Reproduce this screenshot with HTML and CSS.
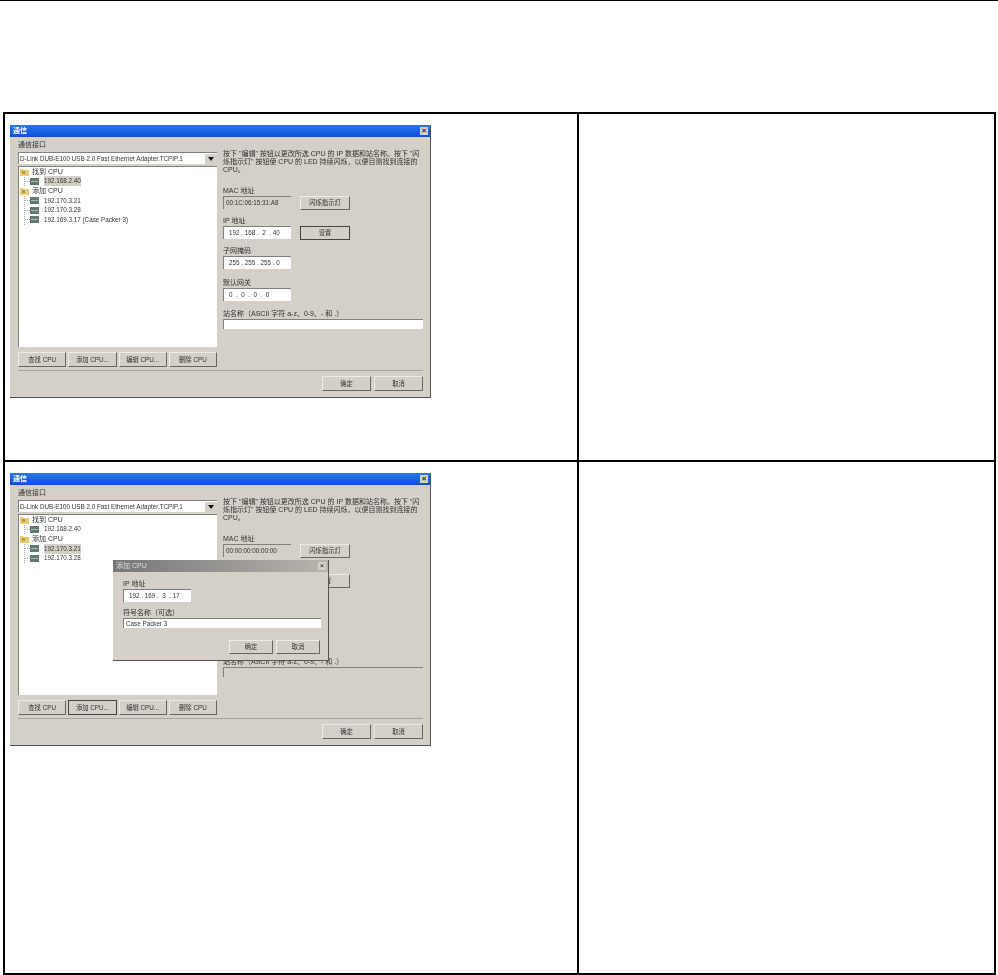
FILE: index.html
```html
<!DOCTYPE html>
<html lang="zh-CN">
<head>
    <meta charset="UTF-8">
    <meta name="viewport" content="width=device-width, initial-scale=1.0">
    <title>通信</title>
    <link rel="stylesheet" href="styles.css">
</head>
<body>

    <div class="top-rule"></div>

    <table class="doc-table">
        <tr class="row-one">
            <td class="cell-left">
                <div class="dialog">
                    <div class="titlebar">
                        <span>通信</span>
                        <span class="close">×</span>
                    </div>
                    <div class="dialog-body">
                        <div class="col-left">
                            <div class="label">通信接口</div>
                            <div class="select">
                                <span>D-Link DUB-E100 USB 2.0 Fast Ethernet Adapter.TCPIP.1</span>
                                <span class="select-arrow"></span>
                            </div>
                            <div class="tree">
                                <div class="tree-row">
                                    <svg class="folder" viewBox="0 0 9 8"><path d="M0 1h3l1 1h5v6H0z" fill="#e8cc70"/><path d="M2 3h3v3H2z" fill="#b09a50"/></svg>
                                    <span class="tree-cn">找到 CPU</span>
                                </div>
                                <div class="tree-group">
                                    <div class="tree-row child">
                                        <svg class="cpu" viewBox="0 0 9 7"><path d="M0 0h9v7H0z" fill="#5f7a6c"/><path d="M1 3h7v1H1z" fill="#a8b8ae"/></svg>
                                        <span class="selected">192.168.2.40</span>
                                    </div>
                                </div>
                                <div class="tree-row">
                                    <svg class="folder" viewBox="0 0 9 8"><path d="M0 1h3l1 1h5v6H0z" fill="#e8cc70"/><path d="M2 3h3v3H2z" fill="#b09a50"/></svg>
                                    <span class="tree-cn">添加 CPU</span>
                                </div>
                                <div class="tree-group">
                                    <div class="tree-row child">
                                        <svg class="cpu" viewBox="0 0 9 7"><path d="M0 0h9v7H0z" fill="#5f7a6c"/><path d="M1 3h7v1H1z" fill="#a8b8ae"/></svg>
                                        <span>192.170.3.21</span>
                                    </div>
                                    <div class="tree-row child">
                                        <svg class="cpu" viewBox="0 0 9 7"><path d="M0 0h9v7H0z" fill="#5f7a6c"/><path d="M1 3h7v1H1z" fill="#a8b8ae"/></svg>
                                        <span>192.170.3.28</span>
                                    </div>
                                    <div class="tree-row child">
                                        <svg class="cpu" viewBox="0 0 9 7"><path d="M0 0h9v7H0z" fill="#5f7a6c"/><path d="M1 3h7v1H1z" fill="#a8b8ae"/></svg>
                                        <span>192.169.3.17 (Case Packer 3)</span>
                                    </div>
                                </div>
                            </div>
                            <div class="button-row">
                                <button>查找 CPU</button>
                                <button>添加 CPU...</button>
                                <button>编辑 CPU...</button>
                                <button>删除 CPU</button>
                            </div>
                        </div>
                        <div class="col-right">
                            <p class="help">按下 "编辑" 按钮以更改所选 CPU 的 IP 数据和站名称。按下 "闪烁指示灯" 按钮使 CPU 的 LED 持续闪烁，以便目测找到连接的 CPU。</p>
                            <div class="label label-mac">MAC 地址</div>
                            <div class="field-row">
                                <div class="field field-off">00:1C:06:15:31:A8</div>
                                <button class="side-btn">闪烁指示灯</button>
                            </div>
                            <div class="label label-gap">IP 地址</div>
                            <div class="field-row">
                                <div class="field ip">192 . 168 .  2  . 40</div>
                                <button class="side-btn focus">设置</button>
                            </div>
                            <div class="label label-gap">子网掩码</div>
                            <div class="field-row">
                                <div class="field ip">255 . 255 . 255 . 0</div>
                            </div>
                            <div class="label label-gap2">默认网关</div>
                            <div class="field-row">
                                <div class="field ip">0  .  0  .  0  .  0</div>
                            </div>
                            <div class="label label-last">站名称（ASCII 字符 a-z、0-9、- 和 .）</div>
                            <div class="field field-wide"></div>
                        </div>
                    </div>
                    <div class="dialog-footer">
                        <button>确定</button>
                        <button>取消</button>
                    </div>
                </div>
            </td>
            <td class="cell-right"></td>
        </tr>
        <tr class="row-two">
            <td class="cell-left">
                <div class="dialog">
                    <div class="titlebar">
                        <span>通信</span>
                        <span class="close">×</span>
                    </div>
                    <div class="dialog-body">
                        <div class="col-left">
                            <div class="label">通信接口</div>
                            <div class="select">
                                <span>D-Link DUB-E100 USB 2.0 Fast Ethernet Adapter.TCPIP.1</span>
                                <span class="select-arrow"></span>
                            </div>
                            <div class="tree">
                                <div class="tree-row">
                                    <svg class="folder" viewBox="0 0 9 8"><path d="M0 1h3l1 1h5v6H0z" fill="#e8cc70"/><path d="M2 3h3v3H2z" fill="#b09a50"/></svg>
                                    <span class="tree-cn">找到 CPU</span>
                                </div>
                                <div class="tree-group">
                                    <div class="tree-row child">
                                        <svg class="cpu" viewBox="0 0 9 7"><path d="M0 0h9v7H0z" fill="#5f7a6c"/><path d="M1 3h7v1H1z" fill="#a8b8ae"/></svg>
                                        <span>192.168.2.40</span>
                                    </div>
                                </div>
                                <div class="tree-row">
                                    <svg class="folder" viewBox="0 0 9 8"><path d="M0 1h3l1 1h5v6H0z" fill="#e8cc70"/><path d="M2 3h3v3H2z" fill="#b09a50"/></svg>
                                    <span class="tree-cn">添加 CPU</span>
                                </div>
                                <div class="tree-group">
                                    <div class="tree-row child">
                                        <svg class="cpu" viewBox="0 0 9 7"><path d="M0 0h9v7H0z" fill="#5f7a6c"/><path d="M1 3h7v1H1z" fill="#a8b8ae"/></svg>
                                        <span class="selected">192.170.3.21</span>
                                    </div>
                                    <div class="tree-row child">
                                        <svg class="cpu" viewBox="0 0 9 7"><path d="M0 0h9v7H0z" fill="#5f7a6c"/><path d="M1 3h7v1H1z" fill="#a8b8ae"/></svg>
                                        <span>192.170.3.28</span>
                                    </div>
                                </div>
                            </div>
                            <div class="button-row">
                                <button>查找 CPU</button>
                                <button class="focus">添加 CPU...</button>
                                <button>编辑 CPU...</button>
                                <button>删除 CPU</button>
                            </div>
                        </div>
                        <div class="col-right">
                            <p class="help">按下 "编辑" 按钮以更改所选 CPU 的 IP 数据和站名称。按下 "闪烁指示灯" 按钮使 CPU 的 LED 持续闪烁，以便目测找到连接的 CPU。</p>
                            <div class="label label-mac">MAC 地址</div>
                            <div class="field-row">
                                <div class="field field-off">00:00:00:00:00:00</div>
                                <button class="side-btn">闪烁指示灯</button>
                            </div>
                            <div class="label label-gap">IP 地址</div>
                            <div class="field-row">
                                <div class="field field-off"></div>
                                <button class="side-btn">设置</button>
                            </div>
                            <div class="label label-gap">子网掩码</div>
                            <div class="field-row">
                                <div class="field field-off"></div>
                            </div>
                            <div class="label label-gap2">默认网关</div>
                            <div class="field-row">
                                <div class="field field-off"></div>
                            </div>
                            <div class="label label-last">站名称（ASCII 字符 a-z、0-9、- 和 .）</div>
                            <div class="field field-wide field-off"></div>
                        </div>
                    </div>
                    <div class="dialog-footer">
                        <button>确定</button>
                        <button>取消</button>
                    </div>

                    <div class="modal">
                        <div class="titlebar titlebar-off">
                            <span>添加 CPU</span>
                            <span class="close">×</span>
                        </div>
                        <div class="modal-body">
                            <div class="label">IP 地址</div>
                            <div class="field ip">192 . 169 .  3  . 17</div>
                            <div class="label label-name">符号名称（可选）</div>
                            <div class="field field-name">Case Packer 3</div>
                            <div class="modal-footer">
                                <button>确定</button>
                                <button>取消</button>
                            </div>
                        </div>
                    </div>
                </div>
            </td>
            <td class="cell-right"></td>
        </tr>
    </table>

</body>
</html>
```

FILE: styles.css
```css
body {
    margin: 0;
    background: white;
    font-family: "Liberation Sans", "Noto Sans CJK SC", sans-serif;
    color: #333;
}
.top-rule {
    border-top: 1px solid #000;
    margin-bottom: 111px;
}

/* tabla del documento */
.doc-table {
    border-collapse: collapse;
    margin-left: 3px;
    width: 993px;
    table-layout: fixed;
}
.doc-table td {
    border: 2px solid #000;
    padding: 0;
    vertical-align: top;
}
.row-one td { height: 335px; }
.row-two td { height: 500px; }
.doc-table td.cell-left {
    width: 567px;
    padding: 11px 0 0 5px;
}

/* ventana */
.dialog {
    position: relative;
    width: 421px;
    box-sizing: border-box;
    background: #d4d0c8;
    border-right: 1px solid #555;
    border-bottom: 1px solid #555;
    font-size: 6.3px;
    line-height: 10px;
    filter: blur(0.5px);
}
.titlebar {
    display: flex;
    justify-content: space-between;
    align-items: center;
    height: 12px;
    padding: 0 2px 0 3px;
    background: linear-gradient(#2a78e8, #0a50d8);
    color: white;
    font-weight: bold;
    font-size: 7px;
}
.titlebar-off {
    background: linear-gradient(90deg, #777, #b8b4ae);
    color: #ddd;
    font-weight: normal;
}
.close {
    width: 8px;
    height: 8px;
    line-height: 8px;
    text-align: center;
    background: #d4d0c8;
    color: #222;
    font-size: 8px;
}
.dialog-body {
    display: grid;
    grid-template-columns: 199px 200px;
    gap: 6px;
    padding: 3px 7px 0 8px;
}
.label { font-size: 7px; }
.select {
    display: flex;
    justify-content: space-between;
    align-items: center;
    height: 12px;
    box-sizing: border-box;
    margin-top: 2px;
    padding-left: 1px;
    background: white;
    border-top: 1px solid #808080;
    border-left: 1px solid #808080;
}
.select-arrow {
    width: 12px;
    height: 10px;
    background: #d4d0c8;
    position: relative;
}
.select-arrow::after {
    content: "";
    position: absolute;
    left: 3px;
    top: 3px;
    border: 3px solid transparent;
    border-top: 4px solid #111;
}
.tree {
    height: 181px;
    box-sizing: border-box;
    margin-top: 2px;
    padding: 0 0 0 1px;
    background: white;
    border-top: 1px solid #808080;
    border-left: 1px solid #808080;
}
.tree-row {
    display: flex;
    align-items: center;
    gap: 3px;
    height: 9.6px;
}
.tree-cn { font-size: 7px; }
.tree-group {
    margin-left: 4px;
    border-left: 1px dotted #aaa;
}
.child { gap: 0; }
.child::before {
    content: "";
    width: 5px;
    border-top: 1px dotted #aaa;
}
.folder { width: 9px; height: 8px; }
.cpu { width: 9px; height: 7px; margin-right: 5px; }
.selected { background: #d4d0c8; }
.button-row {
    display: flex;
    gap: 2px;
    margin-top: 5px;
}
.button-row button { flex: 1; }
button {
    height: 15px;
    padding: 0;
    box-sizing: border-box;
    background: #d4d0c8;
    border: 1px solid;
    border-color: #ecebe5 #666 #666 #ecebe5;
    font: inherit;
    color: inherit;
}
button.focus {
    border-color: #444;
}
.help {
    margin: 10px 0 0;
    line-height: 8px;
    font-size: 7px;
}
.label-mac { margin-top: 12px; }
.label-gap { margin-top: 7px; }
.label-gap2 { margin-top: 9px; }
.label-last { margin-top: 8px; }
.label-name { margin-top: 6px; }
.field-row {
    display: flex;
    align-items: flex-start;
    gap: 9px;
    height: 13px;
}
.field {
    width: 68px;
    height: 13px;
    box-sizing: border-box;
    padding-left: 2px;
    line-height: 11px;
    background: white;
    border-top: 1px solid #808080;
    border-left: 1px solid #808080;
    white-space: pre;
}
.field-off { background: #d4d0c8; }
.ip { padding-left: 5px; }
.field-wide { width: 200px; height: 10px; }
.side-btn { width: 50px; height: 14px; }
.dialog-footer {
    display: flex;
    justify-content: flex-end;
    gap: 3px;
    margin: 3px 7px 0 8px;
    padding: 5px 0 6px;
    border-top: 1px solid #a8a59e;
}
.dialog-footer button { width: 49px; }

/* ventana flotante */
.modal {
    position: absolute;
    left: 103px;
    top: 87px;
    width: 216px;
    height: 101px;
    box-sizing: border-box;
    background: #d4d0c8;
    border-right: 1px solid #555;
    border-bottom: 1px solid #555;
}
.modal-body { padding: 7px 8px 0 10px; }
.field-name { width: 198px; height: 10px; line-height: 9px; }
.modal-footer {
    display: flex;
    justify-content: flex-end;
    gap: 3px;
    margin-top: 12px;
}
.modal-footer button { width: 44px; height: 14px; }
```
